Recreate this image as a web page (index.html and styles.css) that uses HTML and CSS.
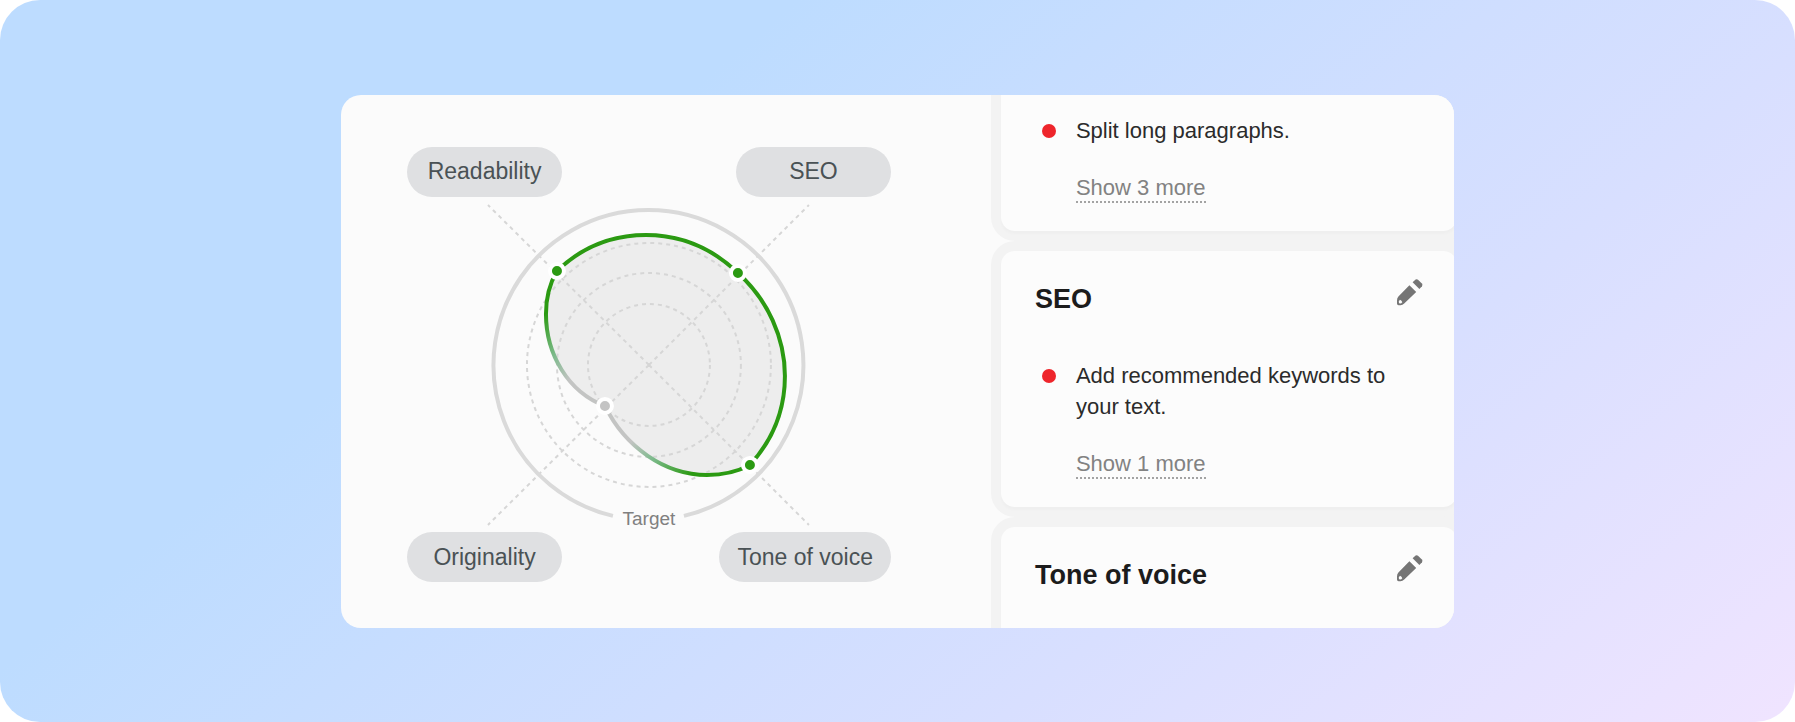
FILE: index.html
```html
<!DOCTYPE html>
<html lang="en">
<head>
  <meta charset="UTF-8" />
  <meta name="viewport" content="width=device-width, initial-scale=1" />
  <title>Content score</title>
  <link rel="stylesheet" href="styles.css">
</head>
<body>
  <main class="stage">
    <div class="panel">
      <section class="chart">
        <div class="pills">
          <button class="pill" type="button">Readability</button>
          <button class="pill" type="button">SEO</button>
        </div>
        <svg class="radar" viewBox="0 0 484 336" role="img" aria-label="Score chart">
          <defs>
            <radialGradient id="score" gradientUnits="userSpaceOnUse" cx="198" cy="209" r="110">
              <stop offset="0.4" stop-color="#c3c4c3" />
              <stop offset="0.65" stop-color="#7dba8c" />
              <stop offset="1" stop-color="#2b9a12" />
            </radialGradient>
          </defs>
          <path class="shape" d="M150 74C175 50 206 38 239 38C273 38 305 51 331 76C361 103 378 141 378 179C378 215 365 244 343 268C330 275 315 278 300 278C258 278 218 250 198 209C161 195 139 157 139 117C139 101 143 86 150 74Z" />
          <!-- grid -->
          <g class="grid">
            <circle cx="242" cy="168" r="61" />
            <circle cx="242" cy="168" r="92" />
            <circle cx="242" cy="168" r="122" />
            <path d="M242 168L81 8M242 168L402 8M242 168L81 328M242 168L402 328" />
          </g>
          <path class="target" d="M277 319A155 155 0 1 0 206 319" />
          <path class="line" d="M150 74C175 50 206 38 239 38C273 38 305 51 331 76C361 103 378 141 378 179C378 215 365 244 343 268C330 275 315 278 300 278C258 278 218 250 198 209C161 195 139 157 139 117C139 101 143 86 150 74Z" />
          <g class="dots">
            <circle cx="150" cy="74" r="7" />
            <circle cx="331" cy="76" r="7" />
            <circle cx="343" cy="268" r="7" />
            <circle class="low" cx="198" cy="209" r="7" />
          </g>
          <text class="target-label" x="242" y="328">Target</text>
        </svg>
        <div class="pills">
          <button class="pill" type="button">Originality</button>
          <button class="pill" type="button">Tone of voice</button>
        </div>
      </section>

      <section class="cards">
        <article class="card card-first">
          <ul class="tips">
            <li>Split long paragraphs.</li>
          </ul>
          <button class="more" type="button">Show 3 more</button>
        </article>

        <article class="card">
          <header class="card-head">
            <h2>SEO</h2>
            <button class="edit" type="button" aria-label="Edit SEO">
              <svg viewBox="0 0 27 28" width="27" height="28">
                <path d="M19.6 1.6Q20.8 .7 22 1.7L25.9 5.6Q27 7 26 8.2L23.4 11L16.6 4.3Z" />
                <path fill-rule="evenodd" d="M13.4 7.2L20.2 13.9L8.2 25.6Q6.6 27.2 4.4 27.2L2.6 27.2Q1 27.2 1 25.4L1 22.6Q1 20.2 2.4 18.5ZM4 21.8L2.8 23.2L3 25.2L5 25.4L6.3 24.2Q5.8 22.4 4 21.8Z" />
              </svg>
            </button>
          </header>
          <ul class="tips">
            <li>Add recommended keywords to your text.</li>
          </ul>
          <button class="more" type="button">Show 1 more</button>
        </article>

        <article class="card card-last">
          <header class="card-head">
            <h2>Tone of voice</h2>
            <button class="edit" type="button" aria-label="Edit tone of voice">
              <svg viewBox="0 0 27 28" width="27" height="28">
                <path d="M19.6 1.6Q20.8 .7 22 1.7L25.9 5.6Q27 7 26 8.2L23.4 11L16.6 4.3Z" />
                <path fill-rule="evenodd" d="M13.4 7.2L20.2 13.9L8.2 25.6Q6.6 27.2 4.4 27.2L2.6 27.2Q1 27.2 1 25.4L1 22.6Q1 20.2 2.4 18.5ZM4 21.8L2.8 23.2L3 25.2L5 25.4L6.3 24.2Q5.8 22.4 4 21.8Z" />
              </svg>
            </button>
          </header>
        </article>
      </section>
    </div>
  </main>
</body>
</html>
```
FILE: styles.css
```css
:root {
  --panel: #fbfbfb;
  --card: #fcfcfc;
  --edge: #f3f3f3;
  --green: #2b9a12;
  --red: #ee252b;
}
* {
  box-sizing: border-box;
}
body {
  margin: 0;
  background: #fff;
  font-family: "Liberation Sans", Arial, sans-serif;
  color: #2b2b2b;
}
button {
  font: inherit;
  color: inherit;
  background: none;
  border: 0;
  padding: 0;
  cursor: pointer;
}
.stage {
  display: flex;
  justify-content: center;
  align-items: center;
  min-height: 100vh;
  padding: 40px 0;
  border-radius: 40px;
  background: linear-gradient(140deg, #bddcff 30%, #d8dfff 70%, #f0e4ff 100%);
}
.panel {
  display: flex;
  width: 62%;
  min-width: 1000px;
  border-radius: 20px;
  background: var(--panel);
  overflow: hidden;
}

/* chart */
.chart {
  flex: 1;
  padding: 52px 110px 45px 66px;
}
.pills {
  display: flex;
  justify-content: space-between;
}
.pill {
  min-width: 155px;
  height: 50px;
  padding: 0 18px;
  border-radius: 25px;
  background: #dfe0e2;
  color: #4a5255;
  font-size: 23px;
}
.radar {
  display: block;
  width: 100%;
}
.shape {
  fill: #ededed;
}
.grid {
  fill: none;
  stroke: #d6d6d6;
  stroke-width: 2;
  stroke-dasharray: 4 4;
}
.target {
  fill: none;
  stroke: #dadada;
  stroke-width: 4;
}
.line {
  fill: none;
  stroke: url(#score);
  stroke-width: 4;
}
.dots circle {
  fill: var(--green);
  stroke: #fff;
  stroke-width: 4;
}
.dots .low {
  fill: #c4c4c4;
}
.target-label {
  fill: #808080;
  font-size: 19px;
  text-anchor: middle;
}

/* cards, running past the right edge of the panel */
.cards {
  flex: 0 0 456px;
  display: flex;
  flex-direction: column;
  gap: 20px;
  margin-right: -3px;
  background: linear-gradient(90deg, transparent 14px, var(--edge) 14px);
}
.card {
  padding: 27px 34px 28px 34px;
  border-radius: 14px;
  background: var(--card);
  box-shadow: 0 3px 3px rgba(0,0,0,0.02), 0 0 0 10px var(--edge);
}
.card-first {
  padding-top: 20px;
  border-top-left-radius: 0;
  border-top-right-radius: 0;
}
.card-last {
  flex: 1;
  padding-bottom: 37px;
  border-bottom-left-radius: 0;
  border-bottom-right-radius: 0;
}
.card-head {
  display: flex;
  justify-content: space-between;
  align-items: flex-start;
}
.card-head + .tips {
  margin-top: 45px;
}
h2 {
  margin: 0;
  padding-top: 5px;
  font-size: 27px;
  line-height: 32px;
  color: #1c1c1c;
}
.edit svg {
  display: block;
  fill: #757575;
}
.tips {
  margin: 0;
  padding: 0;
  list-style: none;
}
.tips li {
  display: flex;
  gap: 20px;
  font-size: 22px;
  line-height: 31px;
}
.tips li::before {
  content: "";
  flex: none;
  width: 14px;
  height: 14px;
  margin: 9px 0 0 7px;
  border-radius: 50%;
  background: var(--red);
}
.more {
  display: block;
  margin: 29px 0 0 41px;
  border-bottom: 2px dotted #a3a3a3;
  color: #828282;
  font-size: 22px;
  line-height: 26px;
}
```
